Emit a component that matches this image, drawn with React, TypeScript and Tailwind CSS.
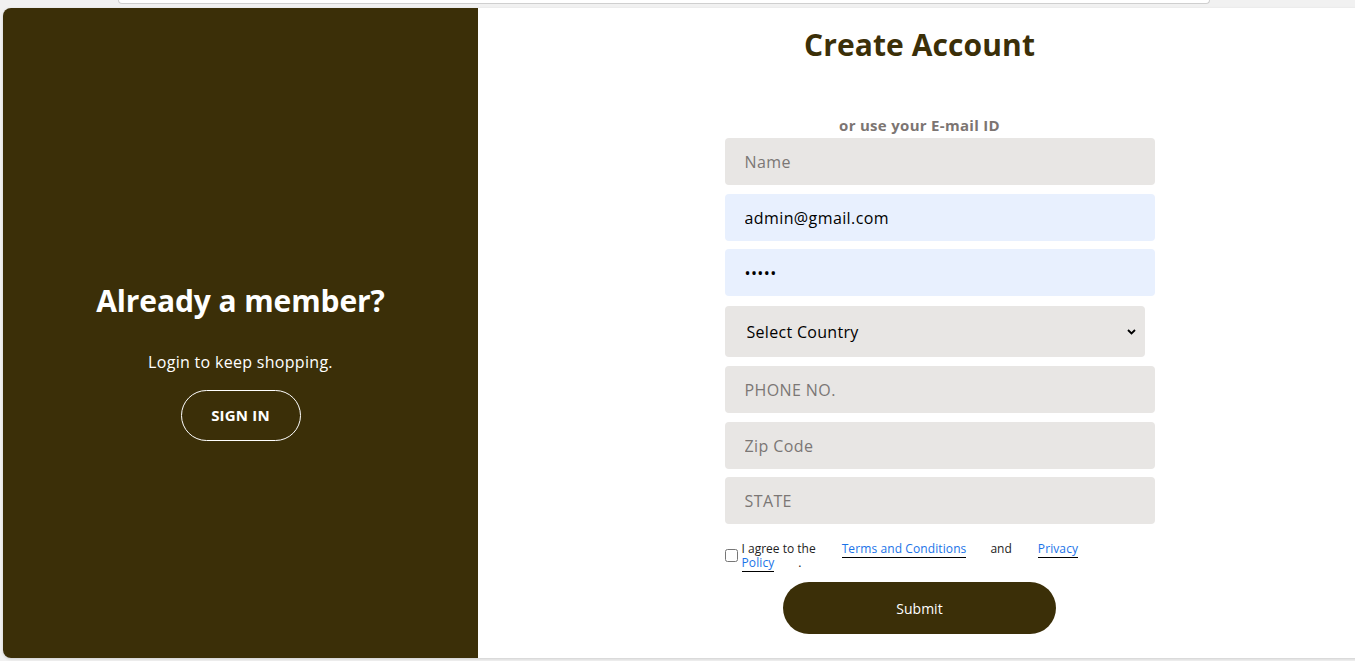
import React from "react";

const BROWN = "bg-[#3b2f08]";

function Field({ placeholder, value, type = "text", filled = false, className = "" }: { placeholder: string; value?: string; type?: string; filled?: boolean; className?: string }) {
    return (
        <input
            type={type}
            placeholder={placeholder}
            value={value}
            readOnly
            className={`block w-[430px] h-[47px] rounded-[4px] pl-[20px] text-[16px] tracking-[0.4px] text-black placeholder:text-[#7b7775] outline-none ${filled ? "bg-[#e8f0fe]" : "bg-[#e8e6e4]"} ${className}`}
        />
    );
}

export default function App() {
    return (
        <div className="h-screen overflow-hidden bg-[#f1f1f1] font-['Open_Sans',sans-serif]">
            {/* bottom edge of the bar above */}
            <div className="ml-[118px] w-[1092px] h-[4px] bg-white border border-t-0 border-[#cfcfcf] rounded-b-[10px]" />

            <div className="ml-[3px] mt-[4px] w-[1358px] h-[650px] flex rounded-l-[8px] overflow-hidden shadow-[0_1px_3px_rgba(0,0,0,0.15)]">
                {/* left panel */}
                <div className={`w-[475px] ${BROWN} flex flex-col items-center text-white pt-[271px]`}>
                    <h2 className="text-[30px] leading-[44px] font-bold tracking-[-0.1px]">Already a member?</h2>
                    <p className="mt-[28px] text-[16px] leading-[22px] tracking-[0.3px]">Login to keep shopping.</p>
                    <button className="mt-[17px] w-[120px] h-[51px] rounded-full border border-white text-[15px] font-bold tracking-[0.2px]">
                        SIGN IN
                    </button>
                </div>

                {/* right panel */}
                <div className="flex-1 bg-white flex flex-col items-center">
                    <h1 className="mt-[15px] text-[30px] leading-[44px] font-bold text-[#3b2f08] tracking-[0.1px]">Create Account</h1>
                    <p className="mt-[48px] text-[15px] leading-[20px] font-bold text-[#7c7572] tracking-[0.3px]">or use your E-mail ID</p>

                    <div className="w-[390px] mt-[3px] flex flex-col">
                        <Field placeholder="Name" />
                        <Field placeholder="Email" value="admin@gmail.com" filled className="mt-[9px]" />
                        <Field placeholder="Password" value="12345" type="password" filled className="mt-[8px]" />

                        <div className="relative mt-[10px] w-[420px] h-[51px]">
                            <select
                                defaultValue=""
                                className="appearance-none w-full h-full rounded-[4px] bg-[#e8e6e4] pl-[22px] text-[16px] tracking-[0.3px] text-black outline-none"
                            >
                                <option value="">Select Country</option>
                                <option value="in">India</option>
                                <option value="us">United States</option>
                            </select>
                            <svg className="absolute right-[9px] top-[23px] pointer-events-none" width="9" height="6" viewBox="0 0 9 6">
                                <path d="M1 1l3.5 3.5L8 1" fill="none" stroke="#000" strokeWidth="1.8" />
                            </svg>
                        </div>

                        <Field placeholder="PHONE NO." className="mt-[9px]" />
                        <Field placeholder="Zip Code" className="mt-[9px]" />
                        <Field placeholder="STATE" className="mt-[8px]" />

                        <div className="mt-[18px] flex items-start">
                            <input type="checkbox" className="mt-[7px] w-[13px] h-[13px] shrink-0" />
                            <p className="ml-[4px] w-[350px] text-[12px] leading-[14px] text-[#222]">
                                I agree to the
                                <a href="#" className="ml-[26px] mr-[24px] text-[#1a73e8] border-b border-black tracking-[0.1px]">Terms and Conditions</a>
                                and
                                <a href="#" className="ml-[26px] mr-[24px] text-[#1a73e8] border-b border-black tracking-[0.1px]">Privacy Policy</a>.
                            </p>
                        </div>

                        <button className={`self-center mt-[12px] w-[273px] h-[52px] rounded-full ${BROWN} text-white text-[14px]`}>
                            Submit
                        </button>
                    </div>
                </div>
            </div>
        </div>
    );
}
